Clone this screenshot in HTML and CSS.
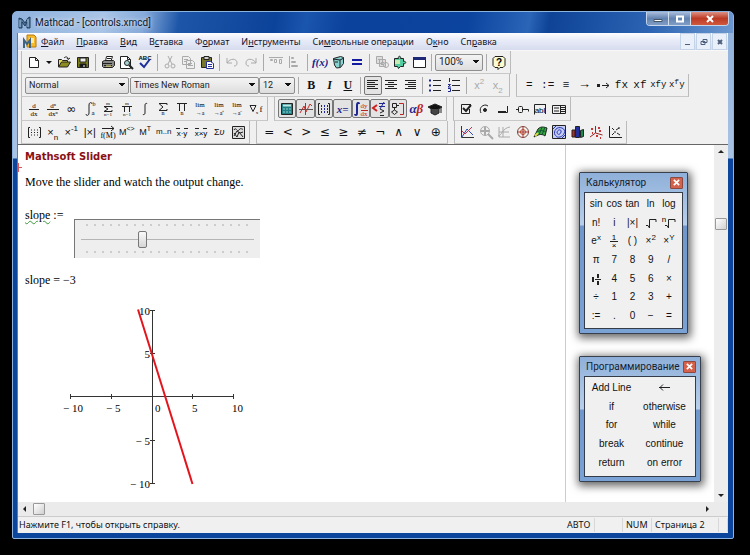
FILE: index.html
```html
<!DOCTYPE html>
<html lang="ru">
<head>
<meta charset="utf-8">
<title>Mathcad - [controls.xmcd]</title>
<link rel="stylesheet" href="styles.css">
</head>
<body>
<div class="window">
  <header class="titlebar">
    <svg class="logo" viewBox="0 0 13 13"><path d="M1 12V2l3 1 3 4 3-5 2-1v11h-3V6l-2 4-3-4v6z" fill="#55779a" stroke="#1e3e60"/><path d="M2 11V4M10 11V3" stroke="#a9c6dd"/></svg>
    <h1>Mathcad - [controls.xmcd]</h1>
    <div class="caption">
      <button aria-label="Свернуть"><svg viewBox="0 0 10 8"><path d="M1 4.500h8v2H1z" fill="#fff" stroke="#456"/></svg></button>
      <button aria-label="Развернуть"><svg viewBox="0 0 10 8"><path d="M2 1.500h6v5H2z" stroke="#fff" stroke-width="2"/></svg></button>
      <button class="close" aria-label="Закрыть"><svg viewBox="0 0 10 8"><path d="M2 1l6 6M8 1L2 7" stroke="#fff" stroke-width="2"/></svg></button>
    </div>
  </header>
  <div class="client">
    <nav class="menubar">
      <svg class="docicon" viewBox="0 0 14 15"><path d="M4 1h7l2 2v10H4z" fill="#f5b92a" stroke="#b77b0c"/><path d="M6 4h5v5H6z" fill="#ffe9a0" stroke="none"/><path d="M1 14V6l3 4 3-4v8" stroke="#3f6386" stroke-width="2"/></svg>
      <a href="#"><u>Ф</u>айл</a><a href="#"><u>П</u>равка</a><a href="#"><u>В</u>ид</a><a href="#">В<u>с</u>тавка</a><a href="#">Ф<u>о</u>рмат</a><a href="#">И<u>н</u>струменты</a><a href="#">Си<u>м</u>вольные операции</a><a href="#">О<u>к</u>но</a><a href="#">Сп<u>р</u>авка</a>
      <div class="mdi">
        <button aria-label="Свернуть документ"><svg viewBox="0 0 10 10"><path d="M2 7.500h5"/></svg></button>
        <button aria-label="Восстановить документ"><svg viewBox="0 0 10 10"><path d="M4 2.500h4v3H4zM2 4.500h4v3H2z"/></svg></button>
        <button aria-label="Закрыть документ"><svg viewBox="0 0 10 10"><path d="M3 3l4 4M7 3L3 7" stroke-width="2"/></svg></button>
      </div>
    </nav>

    <div class="row">
      <div class="toolbar">
        <div class="g1"><button aria-label="Создать"><svg viewBox="0 0 16 16"><path d="M3.500 3.500h6l3 3v7h-9zM9.500 3.500v3h3" fill="#fff"/></svg></button></div>
        <button class="drop" aria-label="Шаблоны"><svg viewBox="0 0 16 16"><path d="M5 7h6l-3 3z" fill="#111" stroke="none"/></svg></button>
        <div class="g2">
          <button aria-label="Открыть"><svg viewBox="0 0 16 16"><path d="M2.500 13V5.500h3l1 1h5v2" fill="#e8dd5a"/><path d="M2.500 13l3-5h9l-3 5z" fill="#8d8c20"/><path d="M8 4c2-2 4-1 4 1m-1-1l1 1.500L14 4"/></svg></button>
          <button aria-label="Сохранить"><svg viewBox="0 0 16 16"><path d="M2.500 3.500h11v10h-11z" fill="#7a7c18"/><path d="M5 4h6v4H5z" fill="#eee"/><path d="M5 10h6v3H5z" fill="#111"/><path d="M9 11v2" stroke="#fff"/></svg></button>
        </div>
        <hr>
        <div class="g3">
          <button aria-label="Печать"><svg viewBox="0 0 16 16"><path d="M5.500 7l1-4.500h6L11 7" fill="#fff"/><path d="M7 4.500h4"/><path d="M2.500 7.500l2-1h9l1 1v4l-2 2h-9l-1-1z" fill="#888"/><path d="M3 9.500h9M4 11.500h8" stroke="#222"/><path d="M6 12h5" stroke="#e7df72"/></svg></button>
          <button aria-label="Просмотр"><svg viewBox="0 0 16 16"><path d="M2.500 2.500h7l3 3v9h-10zM9.500 2.500v3h3" fill="#fff"/><circle cx="9" cy="9" r="2.500" fill="#a9d2d4"/><path d="M11 11l4 4" stroke-width="2"/></svg></button>
          <button aria-label="Орфография"><svg viewBox="0 0 16 16"><text class="b" x="8" y="6" font-size="6">ABC</text><path d="M3 9l4 4 6-8" stroke="#1b2f9c" stroke-width="2"/></svg></button>
        </div>
        <hr>
        <div class="g3">
          <button aria-label="Вырезать" class="off"><svg viewBox="0 0 16 16"><path d="M6 2l4 8M10 2L6 10"/><circle cx="5" cy="12" r="2"/><circle cx="11" cy="12" r="2"/></svg></button>
          <button aria-label="Копировать" class="off"><svg viewBox="0 0 16 16"><path d="M2.500 2.500h6l2 2v6h-8zM6.500 6.500h6l2 2v6h-8z" fill="#eee"/><path d="M4 5.500h4M4 7.500h2M8 9.500h4M8 11.500h5"/></svg></button>
          <button aria-label="Вставить"><svg viewBox="0 0 16 16"><path d="M2.500 3.500h10v10h-10z" fill="#77772a"/><path d="M5 2.500h5v3H5z" fill="#ccc"/><path d="M7.500 7.500h4l3 2v5h-7z" fill="#fff" stroke="#26329b"/><path d="M9 10.500h4M9 12.500h4" stroke="#26329b"/></svg></button>
        </div>
        <hr>
        <div class="g2">
          <button aria-label="Отменить" class="off"><svg viewBox="0 0 16 16"><path d="M3 4v5h5M3 9c3-5 10-5 10 0 0 2-1 3-3 3"/></svg></button>
          <button aria-label="Вернуть" class="off"><svg viewBox="0 0 16 16"><path d="M13 4v5H8M13 9C10 4 3 4 3 9c0 2 1 3 3 3"/></svg></button>
        </div>
        <hr>
        <div class="g2">
          <button aria-label="Выровнять горизонтально" class="off"><svg viewBox="0 0 16 16"><path d="M1 3.500h14M2.500 5.500h2v1h-2zM6.500 5.500h2v3h-2zM11.500 5.500h2v4h-2z"/></svg></button>
          <button aria-label="Выровнять вертикально" class="off"><svg viewBox="0 0 16 16"><path d="M2.500 2v12M4.500 3.500h2v1h-2zM4.500 7.500h4v1h-4zM4.500 11.500h6v1h-6z"/></svg></button>
        </div>
        <hr>
        <div class="g3">
          <button aria-label="Функция" class="fn">f(x)</button>
          <button aria-label="Единицы"><svg viewBox="0 0 16 16"><path d="M3.500 4.500l7-2 3 1v6l-3 4-4 .5-2-3z" fill="#86d3d2"/><path d="M3 5l7 1 4-2M10 6v7M5 8h3" /></svg></button>
          <button aria-label="Вычислить"><svg viewBox="0 0 16 16"><path d="M3 6h10M3 10h10" stroke="#151ba0" stroke-width="2"/></svg></button>
        </div>
        <hr>
        <div class="g3">
          <button aria-label="Ссылка" class="off"><svg viewBox="0 0 16 16"><path d="M2.500 2.500h6v7h-6zM5.500 5.500h6v7h-6z" fill="#ddd"/><path d="M4 5.500h3M7 8.500h3M7 10.500h3"/><circle cx="12" cy="11" r="2.500"/></svg></button>
          <button aria-label="Компонент"><svg viewBox="0 0 16 16"><path d="M2.500 4.500h4c-1-3 3-3 2 0h3v3c3-1 3 3 0 2v3h-3l-2 2-1-2h-3z" fill="#55cda3"/><path d="M3 6h5v4H3z" fill="#c8ecb6" stroke="none"/></svg></button>
          <button aria-label="Окно"><svg viewBox="0 0 16 16"><path d="M2.500 3.500h12v10h-12z" fill="#fff"/><path d="M2 4.500h13" stroke="#1d2878" stroke-width="3"/></svg></button>
        </div>
        <hr>
        <select class="zoom" aria-label="Масштаб"><option>100%</option></select>
        <hr>
        <div class="g1"><button aria-label="Справка"><svg viewBox="0 0 16 16"><path d="M4 2.500h8l2 2v7l-2 2H9l-2 2v-2H4l-2-2v-7z" fill="#fdfbd0"/><text class="b" x="8" y="12" font-size="10">?</text></svg></button></div>
      </div>
    </div>

    <div class="row">
      <div class="toolbar">
        <select class="style" aria-label="Стиль"><option>Normal</option></select>
        <select class="font" aria-label="Шрифт"><option>Times New Roman</option></select>
        <select class="size" aria-label="Размер"><option>12</option></select>
        <hr>
        <div class="g3 biu"><button><b>B</b></button><button><i>I</i></button><button><u>U</u></button></div>
        <hr>
        <div class="g3">
          <button aria-label="По левому краю" class="on"><svg viewBox="0 0 16 16"><path d="M2 3.500h11M2 5.500h8M2 7.500h11M2 9.500h8M2 11.500h11"/></svg></button>
          <button aria-label="По центру"><svg viewBox="0 0 16 16"><path d="M2 3.500h12M5 5.500h6M2 7.500h12M5 9.500h6M2 11.500h12"/></svg></button>
          <button aria-label="По правому краю"><svg viewBox="0 0 16 16"><path d="M3 3.500h11M6 5.500h8M3 7.500h11M6 9.500h8M3 11.500h11"/></svg></button>
        </div>
        <hr>
        <div class="g2">
          <button aria-label="Маркеры"><svg viewBox="0 0 16 16"><path d="M6 3.500h8M6 8.500h8M6 13.500h8"/><path d="M2 3.500h2M2 8.500h2M2 13.500h2" stroke="#1c2793" stroke-width="2"/></svg></button>
          <button aria-label="Нумерация"><svg viewBox="0 0 16 16"><path d="M6 3.500h8M6 8.500h8M6 13.500h8"/><path d="M3.500 1v4M2 7.500h2.500L2 10h3M2 11.500h2.500v3H2" stroke="#1c2793"/></svg></button>
        </div>
        <hr>
        <div class="g2"><button class="off">x<sup>2</sup></button><button class="off">x<sub>2</sub></button></div>
      </div>
      <div class="toolbar">
        <div class="g9 mono"><button>=</button><button>:=</button><button>≡</button><button class="arrow">→</button><button aria-label="Символьный знак с ключом"><svg viewBox="0 0 16 16"><path d="M2 7h3v3H2z" fill="#222" stroke="none"/><path d="M7 8.500h7M11 6l3 2.500-3 2.500"/></svg></button><button>fx</button><button>xf</button><button class="three">xfy</button><button class="three">x<sup>f</sup>y</button></div>
      </div>
    </div>

    <div class="row">
      <div class="toolbar">
        <div class="g13">
          <button aria-label="Производная"><svg viewBox="0 0 16 16"><text x="8" y="7" font-size="7">d</text><path d="M3 8.500h10"/><text x="8" y="15" font-size="7">dx</text></svg></button>
          <button aria-label="Производная n"><svg viewBox="0 0 16 16"><text x="8" y="7" font-size="7">dⁿ</text><path d="M2 8.500h12"/><text x="8" y="15" font-size="7">dxⁿ</text></svg></button>
          <button class="math">∞</button>
          <button aria-label="Определённый интеграл"><svg viewBox="0 0 16 16"><path d="M10 3c0-2-3-2-3 1v8c0 3-3 3-3 1"/><text x="12" y="5" font-size="6">b</text><text x="11" y="14" font-size="7">a</text></svg></button>
          <button aria-label="Сумма по диапазону"><svg viewBox="0 0 16 16"><text x="8" y="4" font-size="5">m</text><path d="M12 6.500V5.500H4l4 2.500-4 2.500h8V9"/><text x="8" y="15" font-size="5">n=1</text></svg></button>
          <button aria-label="Произведение по диапазону"><svg viewBox="0 0 16 16"><text x="8" y="4" font-size="5">m</text><path d="M3 5.500h10M5.500 6v5M10.500 6v5"/><text x="8" y="15" font-size="5">n=1</text></svg></button>
          <button aria-label="Интеграл"><svg viewBox="0 0 16 16"><path d="M10 3c0-1-2-1-2 1v8c0 2-2 2-2 1"/></svg></button>
          <button aria-label="Сумма"><svg viewBox="0 0 16 16"><path d="M12 4V2.500H4L8 6l-4 3.500h8V8"/><text x="8" y="14" font-size="6">n</text></svg></button>
          <button aria-label="Произведение"><svg viewBox="0 0 16 16"><path d="M3 2.500h10M5.500 3v7M10.500 3v7"/><text x="8" y="14" font-size="6">n</text></svg></button>
          <button aria-label="Предел"><svg viewBox="0 0 16 16"><text x="8" y="6" font-size="7">lim</text><text x="8" y="14" font-size="6">→a</text></svg></button>
          <button aria-label="Предел справа"><svg viewBox="0 0 16 16"><text x="8" y="6" font-size="7">lim</text><text x="8" y="14" font-size="6">→a⁺</text></svg></button>
          <button aria-label="Предел слева"><svg viewBox="0 0 16 16"><text x="8" y="6" font-size="7">lim</text><text x="8" y="14" font-size="6">→a⁻</text></svg></button>
          <button aria-label="Градиент"><svg viewBox="0 0 16 16"><path d="M2 4.500h6l-3 6z"/><text x="9" y="13" font-size="5">x</text><text x="13" y="11" font-size="9">f</text></svg></button>
        </div>
      </div>
      <div class="toolbar">
        <div class="g9">
          <button aria-label="Калькулятор" class="on"><svg viewBox="0 0 16 16"><path d="M2.500 2.500h11v11h-11z" fill="#227f85"/><path d="M4 4.500h8" stroke="#bde8e2" stroke-width="2"/><path d="M4 8h8M4 11h8" stroke="#8bd6d3" stroke-dasharray="2 1" stroke-width="1"/></svg></button>
          <button aria-label="График" class="on"><svg viewBox="0 0 16 16"><path d="M1 8.500h14M7.500 2v12" stroke="#555"/><path d="M2 12l4-7 2 6 4-8 2 2" stroke="#c42e2a"/></svg></button>
          <button aria-label="Матрица" class="on"><svg viewBox="0 0 16 16"><path d="M4 2.500H2.500v11H4M12 2.500h1.500v11H12"/><path d="M5 5h7M5 8h7M5 11h7" stroke="#1c2793" stroke-dasharray="1 2" stroke-width="2"/></svg></button>
          <button class="on eval">x=</button>
          <button aria-label="Анализ" class="on"><svg viewBox="0 0 16 16"><path d="M6 3c0-2-2-1-2 1v8c0 3-2 2-2 1" stroke="#1c2793" stroke-width="2"/><g class="red"><text x="11" y="7" font-size="7">dy</text><text x="11" y="15" font-size="7">dx</text></g><path d="M8 9.500h7" stroke="#b22"/></svg></button>
          <button aria-label="Булевы" class="on"><svg viewBox="0 0 16 16"><path d="M6 4L2 7l4 3" stroke="#c22" stroke-width="2"/><path d="M8 2.500h6M8 5.500h6M9 8l4-7" stroke="#1c2793"/><path d="M9 8l4 2-4 2M9 14.500h4"/></svg></button>
          <button aria-label="Программирование" class="on"><svg viewBox="0 0 16 16"><path d="M2.500 2.500h4v4h-4zM4.500 7v2M4.500 9l3 2-3 2.500-3-2.500zM7 4.500h2"/><path d="M9 2.500h4.500v11H10" stroke="#b22"/></svg></button>
          <button class="greek">α<b>β</b></button>
          <button aria-label="Символьные"><svg viewBox="0 0 16 16"><path d="M1 6l7-3 7 3-7 4z" fill="#111"/><path d="M4 8v4l4 2 4-2V8" fill="#444"/><path d="M14 6v6"/></svg></button>
        </div>
      </div>
      <div class="toolbar">
        <div class="g6">
          <button aria-label="Флажок"><svg viewBox="0 0 16 16"><path d="M13 3.500H3.500v9h8V8"/><path d="M5 7l3 3 5-6" stroke-width="2"/></svg></button>
          <button aria-label="Переключатель"><svg viewBox="0 0 16 16"><path d="M4 12c-2-4 0-8 5-8l2 1"/><circle cx="8" cy="9" r="1.500" fill="#222"/></svg></button>
          <button aria-label="Кнопка"><svg viewBox="0 0 16 16"><path d="M3 11.500h9.500V5"/><path d="M3 10.500h8"/></svg></button>
          <button aria-label="Ползунок"><svg viewBox="0 0 16 16"><path d="M2 8.500h2M9 8.500h5.500v2"/><rect x="4.500" y="5.500" width="4" height="6" rx="1"/></svg></button>
          <button aria-label="Поле"><svg viewBox="0 0 16 16"><path d="M14 3.500H2.500v10M13.500 3v10"/><text class="s" x="8" y="12" font-size="8">abl</text></svg></button>
          <button aria-label="Список"><svg viewBox="0 0 16 16"><path d="M1.500 4.500h13v8h-13zM9.500 4v9M3 7h5M3 10h5" /><path d="M10 6.500h4M10 10.500h4M10 8.500h4"/></svg></button>
        </div>
      </div>
    </div>

    <div class="row">
      <div class="toolbar">
        <div class="g12">
          <button aria-label="Матрица"><svg viewBox="0 0 16 16"><path d="M4 3.500H2.500v10H4M13 3.500h1.500v10H13"/><path d="M5 6h8M5 8.500h8M5 11h8" stroke-dasharray="1 2"/></svg></button>
          <button>×<sub>n</sub></button><button>×<sup>-1</sup></button><button>|×|</button>
          <button aria-label="Векторизация"><svg viewBox="0 0 16 16"><path d="M2 4.500h12M11 2l3 2.500L11 7"/><text x="8" y="14" font-size="8">f(M)</text></svg></button>
          <button class="mini">M<sup>&lt;&gt;</sup></button><button class="mini">M<sup>T</sup></button><button class="mini dots">m..n</button>
          <button aria-label="Скалярное произведение"><svg viewBox="0 0 16 16"><path d="M2 4.500h4M10 4.500h4"/><text class="s" x="8" y="12" font-size="8">x·y</text></svg></button>
          <button aria-label="Векторное произведение"><svg viewBox="0 0 16 16"><path d="M2 4.500h4M10 4.500h4"/><text class="s" x="8" y="12" font-size="8">x×y</text></svg></button>
          <button class="mini">Σ<i>υ</i></button>
          <button aria-label="Изображение"><svg viewBox="0 0 16 16"><path d="M2.500 2.500h12v12h-12z" fill="#ddd"/><path d="M4 6c2-4 3 3 5 0s3 0 4-1M4 9l3 4 2-5 4 5M4 12l3-5 3 2 3-1"/></svg></button>
        </div>
      </div>
      <div class="toolbar">
        <div class="g10 math"><button>=</button><button>&lt;</button><button>&gt;</button><button>≤</button><button>≥</button><button>≠</button><button>¬</button><button>∧</button><button>∨</button><button>⊕</button></div>
      </div>
      <div class="toolbar">
        <div class="g9">
          <button aria-label="График XY"><svg viewBox="0 0 16 16"><path d="M2.500 2v11.500H15" stroke="#333"/><path d="M3 13l5-8 6 6" stroke="#264bbd"/><path d="M3 7l3 3 7-7" stroke="#c43252"/></svg></button>
          <button aria-label="Масштаб графика" class="off"><svg viewBox="0 0 16 16"><circle cx="7" cy="7" r="4.500"/><path d="M7 3v8M3 7h8M10 10l5 5" stroke-width="2"/></svg></button>
          <button aria-label="Трассировка" class="off"><svg viewBox="0 0 16 16"><path d="M2 12c4 0 4-8 12-9M3 3v10h11M7 3v10M3 8h10"/></svg></button>
          <button aria-label="Полярный график"><svg viewBox="0 0 16 16"><circle cx="8" cy="8" r="5.500" stroke="#7c4a3c"/><circle cx="8" cy="8" r="2.500" stroke="#b52"/><path d="M2 8h12M8 2v12" stroke="#a33"/></svg></button>
          <button aria-label="Поверхность"><svg viewBox="0 0 16 16"><path d="M1 13l4-8c3-3 6-2 9-1l-2 8c-4-3-7-1-11 1z" fill="#36a63d"/><path d="M3 9c3-3 6-3 10-1M6 11l3-8M9 11l3-8" stroke="#153"/><path d="M2 12l3-3" stroke="#d7db3d" stroke-width="2"/></svg></button>
          <button aria-label="Контурный график"><svg viewBox="0 0 16 16"><path d="M1.500 1.500h13v13h-13z" fill="#c5cdf2"/><path d="M4 11c-2-4 2-9 7-7s2 8-2 9-4-2-5-2z" stroke="#2938b6"/><path d="M6 9c0-4 5-4 4-1s-3 3-4 1zM2 5l3-3M11 14l3-3" stroke="#2938b6"/></svg></button>
          <button aria-label="Столбчатый график"><svg viewBox="0 0 16 16"><path d="M2 6h3v7H2z" fill="#b52b20"/><path d="M5.500 2.500h4v11h-4z" fill="#23309c"/><path d="M10.500 6.500l3-1v7l-3 1z" fill="#178b50"/></svg></button>
          <button aria-label="Точечный график"><svg viewBox="0 0 16 16"><path d="M7.500 2v7M7.500 9L2 13M7.500 9l7 2" stroke="#922"/><path d="M3 5h2M10 4h2M4 9h1M11 7h2M8 12h2M12 14h1" stroke="#c33" stroke-width="2"/></svg></button>
          <button aria-label="Векторное поле"><svg viewBox="0 0 16 16"><path d="M2.500 2v11.500H15"/><path d="M5 4l2 2M12 4l-3 2M5 11l2-2M10 9l3 2M8 7v2M12 3v2" stroke-width="1"/></svg></button>
        </div>
      </div>
    </div>

    <div class="work">
      <main class="sheet">
        <span class="cursor" aria-hidden="true"></span>
        <div class="page">
          <h2>Mathsoft Slider</h2>
          <p class="intro">Move the slider and watch the output change.</p>
          <div class="define">
            <label for="slope"><span class="wavy">slope</span> :=</label>
            <div class="slider">
              <div class="ticks"></div>
              <input id="slope" type="range" min="-10" max="10" value="-3">
              <div class="ticks"></div>
            </div>
          </div>
          <p class="result">slope = −3</p>
          <svg class="plot" viewBox="0 0 200 200">
            <path d="M10 101.500h164M92.500 15v174" stroke="#333"/>
            <path d="M10.500 99v5M51.500 99v5M132.500 99v5M173.500 99v5M90 15.500h5M90 58.500h5M90 145.500h5M90 188.500h5" stroke="#333"/>
            <path d="M78 14.500L132.500 189" stroke="#e3141c" stroke-width="2"/>
            <g font-size="11">
              <text x="3" y="117">− 10</text><text x="46" y="117">− 5</text><text x="95" y="117">0</text><text x="132" y="117">5</text><text x="172" y="117">10</text>
            </g>
            <g font-size="11" class="end">
              <text x="90" y="20">10</text><text x="90" y="63">5</text><text x="90" y="150">− 5</text><text x="90" y="193">− 10</text>
            </g>
          </svg>
        </div>
        <section class="palette calc">
          <header><h3>Калькулятор</h3><button class="x" aria-label="Закрыть калькулятор"><svg viewBox="0 0 10 8"><path d="M2 1l6 6M8 1L2 7" stroke="#fff" stroke-width="2"/></svg></button></header>
          <div class="keys">
            <button>sin</button><button>cos</button><button>tan</button><button>ln</button><button>log</button>
            <button>n!</button><button>i</button><button>|×|</button><button aria-label="Корень"><svg viewBox="0 0 16 16"><path d="M3 10.500h2L6.500 13V4.500H13V7"/></svg></button><button aria-label="Корень n"><svg viewBox="0 0 16 16"><text class="s" x="3" y="7" font-size="8">n</text><path d="M4 10.500h2L7.500 13V4.500H14V7"/></svg></button>
            <button>e<sup>x</sup></button><button aria-label="Обратная величина"><svg viewBox="0 0 16 16"><text class="s" x="8" y="7" font-size="8">1</text><path d="M4 8.500h8"/><text class="s" x="8" y="15" font-size="8">×</text></svg></button><button>( )</button><button>×<sup>2</sup></button><button>×<sup>Y</sup></button>
            <button>π</button><button>7</button><button>8</button><button>9</button><button>/</button>
            <button aria-label="Смешанное число"><svg viewBox="0 0 16 16"><path d="M5 6v5M10 3v4M10 10v4" stroke-width="2"/><path d="M7 8.500h6"/></svg></button><button>4</button><button>5</button><button>6</button><button>×</button>
            <button>÷</button><button>1</button><button>2</button><button>3</button><button>+</button>
            <button>:=</button><button>.</button><button>0</button><button>−</button><button>=</button>
          </div>
        </section>
        <section class="palette prog">
          <header><h3>Программирование</h3><button class="x" aria-label="Закрыть программирование"><svg viewBox="0 0 10 8"><path d="M2 1l6 6M8 1L2 7" stroke="#fff" stroke-width="2"/></svg></button></header>
          <div class="keys">
            <button>Add Line</button><button aria-label="Присвоить"><svg viewBox="0 0 16 16"><path d="M2 7.500h11M6 4.500l-3 3 3 3"/></svg></button>
            <button>if</button><button>otherwise</button>
            <button>for</button><button>while</button>
            <button>break</button><button>continue</button>
            <button>return</button><button>on error</button>
          </div>
        </section>
      </main>
      <div class="vscroll">
        <button aria-label="Вверх"><svg viewBox="0 0 8 8"><path d="M1 5h6L4 2z"/></svg></button>
        <span class="thumb"></span>
        <button aria-label="Вниз"><svg viewBox="0 0 8 8"><path d="M1 3h6L4 6z"/></svg></button>
      </div>
    </div>
    <div class="hscroll">
      <button aria-label="Влево"><svg viewBox="0 0 8 8"><path d="M5 1v6L2 4z"/></svg></button>
      <span class="thumb"></span>
      <button aria-label="Вправо"><svg viewBox="0 0 8 8"><path d="M3 1v6l3-3z"/></svg></button>
    </div>
    <footer class="status">
      <span class="hint">Нажмите F1, чтобы открыть справку.</span>
      <span class="auto">АВТО</span><span class="gap"></span><span class="num">NUM</span><span class="pg">Страница 2</span><span class="tail"></span>
    </footer>
  </div>
</div>
</body>
</html>
```
FILE: styles.css
```css
* { box-sizing: border-box; }
html, body { height: 100%; }
body {
  margin: 0;
  padding: 11px 16px 16px 12px;
  background: #000;
  color: #111;
  font: 10px/12px "Noto Sans", "Open Sans", sans-serif;
  overflow: hidden;
}
button {
  margin: 0; padding: 0; border: 0; background: none;
  color: inherit; font: inherit;
  display: flex; align-items: center; justify-content: center;
  min-width: 0; white-space: nowrap;
}
svg { fill: none; stroke: #222; display: block; flex: none; overflow: visible; }
svg text {
  fill: #000; stroke: none; text-anchor: middle;
  font-family: "Liberation Serif", serif;
}
svg text.s { font-family: "Liberation Sans", sans-serif; }
svg text.b { font-family: "Liberation Sans", sans-serif; font-weight: bold; }
svg .red text { fill: #b22; }
h1, h2, h3, p { margin: 0; font-weight: normal; }
sup, sub { font-size: 8px; line-height: 0; }
sup { align-self: flex-start; margin-top: 6px; }
sub { align-self: flex-end; margin-bottom: 4px; }

.window {
  height: 100%;
  display: flex; flex-direction: column;
  padding: 0 5px 5px 4px;
  border-radius: 5px 5px 2px 2px;
  border: 1px solid #8db4e0;
  background: linear-gradient(#8fb0da 0, #a9c3e4 146px, #0b469c 147px, #0b469c 100%);
}
.titlebar {
  display: flex; align-items: center; gap: 4px;
  height: 21px; flex: none;
  margin: 0 -5px 0 -4px; padding-left: 5px;
  border-radius: 4px 4px 0 0;
  background: linear-gradient(100deg, #8fb2dd 0, #a9c4e6 90px, #86aada 130px, #1d56a8 165px, #0c439a 260px, #1a55ae 290px, #0b429b 330px, #0b449e 450px, #2a65b8 510px, #0e4396 530px, #2c64b3 630px, #6d98d0 100%);
}
.logo { width: 13px; height: 13px; }
.titlebar h1 { font: 10px/12px Roboto, sans-serif; color: #0d1a2c; text-shadow: 0 0 4px #fff; }
.caption {
  display: flex; align-self: flex-start; margin-left: auto; margin-right: 4px;
  border: 1px solid #c5d6ea; border-top: 0; border-radius: 0 0 4px 4px; overflow: hidden;
}
.caption button { width: 22px; height: 13px; background: linear-gradient(#a9bedb, #6383b0 50%, #7f9dc6); border-right: 1px solid #d4e0ee; }
.caption svg { width: 10px; height: 8px; }
.caption .close { width: 37px; border: 0; background: linear-gradient(#dd9184, #bc3924 50%, #d0593d); }

.client { flex: 1; min-height: 0; display: flex; flex-direction: column; background: #f0f0f0; border-left: 1px solid #777; }
.menubar {
  display: flex; align-items: center;
  height: 18px; flex: none;
  background: linear-gradient(#fdfdff, #e9ecf8 40%, #d6dcef);
  border-bottom: 1px solid #f8f8f8;
}
.docicon { width: 14px; height: 15px; margin: 0 4px 0 5px; }
.menubar a { color: #14142c; text-decoration: none; font-size: 9px; margin-right: 12px; white-space: nowrap; }
.menubar u { text-underline-offset: 1px; }
.mdi { display: flex; align-self: stretch; margin-left: auto; gap: 1px; padding-right: 1px; }
.mdi button { width: 15px; background: #eaf0fa; border: 1px solid #c5d3e8; }
.mdi svg { width: 10px; height: 10px; stroke: #4c5f7c; }

.row { display: flex; height: 23px; flex: none; }
.row:nth-of-type(3) { height: 24px; }
.toolbar {
  display: flex; align-items: center;
  padding: 0 2px 0 3px; margin-left: 3px;
  border-left: 1px solid #bbb; border-right: 1px solid #bbb;
  border-bottom: 1px solid #c8c8c8;
}
.toolbar ~ .toolbar { margin-left: 6px; }
.toolbar > div { display: grid; grid-auto-flow: column; grid-auto-columns: 1fr; }
.g1 { width: 18px; } .g2 { width: 37px; } .g3 { width: 55px; } .g6 { width: 111px; }
.g9 { width: 166px; } .g10 { width: 185px; } .g12 { width: 222px; } .g13 { width: 240px; }
.toolbar button { height: 19px; font: 11px/12px "Liberation Sans", sans-serif; }
.toolbar svg { width: 16px; height: 16px; }
.toolbar .drop { width: 12px; }
.toolbar hr { width: 1px; height: 17px; margin: 0 3px; border: 0; background: #aaa; }
.toolbar .off { color: #aaa; }
.toolbar .off svg { stroke: #aaa; }
.toolbar .on { border: 1px solid #777; border-radius: 2px; background: #e3e3e3; }
.toolbar .fn, .toolbar .eval { font: italic bold 11px/12px "Liberation Serif", serif; color: #171d8c; }
.toolbar .greek { font: italic bold 13px/12px "Liberation Serif", serif; color: #1c2793; }
.greek b { color: #b22; }
.toolbar .biu button { font: bold 12px/14px "Liberation Serif", serif; }
.toolbar .mono button { font: 11px/12px "Liberation Mono", "DejaVu Sans Mono", monospace; }
.toolbar .mono .arrow { font-size: 13px; }
.toolbar .mono .three { font-size: 9px; }
.toolbar .math button, .toolbar button.math { font: 12px/14px "DejaVu Sans", sans-serif; }
.toolbar .mini { font-size: 9px; }
.toolbar .mini sup { font-size: 7px; }
.toolbar .dots { font-size: 8px; }
select {
  appearance: none; height: 17px; padding: 0 3px;
  border: 1px solid #8f8f8f; border-radius: 2px; color: #222;
  font: 9px/12px Roboto, "Liberation Sans", sans-serif;
  background:
    linear-gradient(to bottom left, #111 50%, transparent 50%) right 6px center / 3px 4px no-repeat,
    linear-gradient(to bottom right, #111 50%, transparent 50%) right 3px center / 3px 4px no-repeat,
    linear-gradient(#f4f4f4, #dedede);
}
.style { width: 104px; margin-right: 1px; }
.font { width: 129px; }
.size { width: 36px; }
.zoom { width: 48px; font-size: 10px; }

.work { flex: 1; min-height: 0; display: flex; border-top: 1px solid #666; }
.sheet {
  position: relative; flex: 1; min-width: 0; overflow: hidden;
  background: linear-gradient(#ccc, #ccc) 547px 0 / 1px 100% no-repeat #fff;
}
.cursor { position: absolute; left: 0; top: 18px; width: 4px; height: 9px; border-left: 1px solid #d55; background: linear-gradient(#d55, #d55) 0 4px / 4px 1px no-repeat; }
.page { padding: 5px 0 0 7px; font: 12px/16px "Liberation Serif", "Times New Roman", serif; color: #000; }
.page h2 { font: bold 10px/14px "DejaVu Sans", Verdana, sans-serif; color: #8b1014; }
.intro { margin-top: 10px; }
.define { display: flex; align-items: flex-start; margin-top: 17px; height: 49px; }
.define label { width: 49px; white-space: nowrap; }
.wavy { text-decoration: underline wavy #3a9a3a 1px; text-underline-offset: 1px; }
.slider {
  width: 186px; height: 39px; margin-top: 12px; padding: 4px 6px;
  border-left: 1px solid #777; border-top: 1px solid #777;
  background: #eee;
  display: flex; flex-direction: column; justify-content: space-between;
}
.ticks { height: 3px; margin: 0 2px; background: radial-gradient(circle at 4px 1px, #ccc 1px, transparent 1px) 0 0 / 8px 3px repeat-x; }
.slider input { appearance: none; width: 100%; height: 18px; margin: 0; background: linear-gradient(#b5b5b5, #b5b5b5) 0 9px / 100% 1px no-repeat; }
.slider input::-webkit-slider-thumb { appearance: none; width: 9px; height: 17px; border: 1px solid #777; border-radius: 2px; background: linear-gradient(#fafafa, #d5d5d5); }
.result { margin-top: 16px; }
.plot { width: 200px; height: 200px; margin: 7px 0 0 35px; }
.plot text { text-anchor: start; }
.plot .end text { text-anchor: end; }

.palette {
  position: absolute; left: 561px; padding: 0 4px 4px;
  border: 1px solid #37404c; border-radius: 1px;
  background: linear-gradient(#8fb0da, #b8cfea 52px, #6f97cc 53px, #7ba2d4);
  box-shadow: 1px 2px 8px 2px rgba(0,0,0,.6);
}
.palette header { display: flex; align-items: center; height: 19px; padding-left: 2px; }
.palette h3 { font: 10px/12px Roboto, sans-serif; color: #141e30; }
.x { margin-left: auto; width: 13px; height: 12px; background: #d3614b; border: 1px solid #8b4941; border-radius: 1px; }
.x svg { width: 9px; height: 7px; }
.keys { display: grid; grid-auto-rows: 1fr; background: #f0f0f0; border: 1px solid #333c48; font: 10px/12px "Liberation Sans", sans-serif; }
.keys svg { width: 16px; height: 16px; }
.calc { top: 27px; width: 109px; }
.calc .keys { grid-template-columns: repeat(5, 1fr); height: 137px; padding: 2px 4px 3px 2px; }
.prog { top: 211px; width: 122px; }
.prog .keys { grid-template-columns: 1fr 1fr; height: 101px; padding: 2px 4px 4px 0; }

.vscroll { width: 14px; display: flex; flex-direction: column; background: #ededed; }
.vscroll button, .hscroll button { width: 14px; height: 14px; flex: none; }
.vscroll svg, .hscroll svg { width: 8px; height: 8px; fill: #222; stroke: none; }
.thumb { flex: none; width: 12px; height: 12px; border: 1px solid #999; border-radius: 1px; background: linear-gradient(135deg, #fff, #d0d0d0); }
.vscroll .thumb { margin: 59px 1px auto; }
.hscroll { display: flex; align-items: center; height: 14px; flex: none; background: #ebebeb; padding-right: 14px; }
.hscroll .thumb { margin-left: 1px; margin-right: auto; }
.status { display: flex; align-items: center; height: 17px; flex: none; border-top: 1px solid #ccc; color: #111; font-size: 9px; }
.status span { border-right: 1px solid #d8d8d8; height: 14px; line-height: 14px; white-space: nowrap; }
.status .hint { flex: 1; border: 0; padding-left: 1px; }
.auto { width: 28px; }
.gap { width: 28px; }
.num { width: 29px; padding-left: 3px; }
.pg { width: 67px; padding-left: 3px; }
.tail { width: 9px; }
```
